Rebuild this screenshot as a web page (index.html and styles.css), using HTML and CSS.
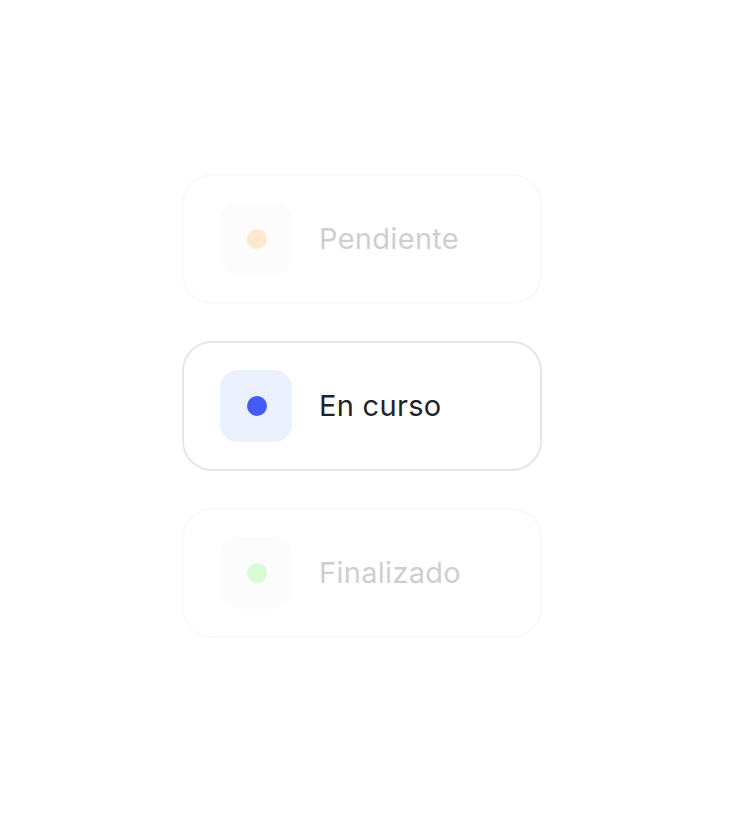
FILE: index.html
```html
<!DOCTYPE html>
<html lang="es">
<head>
    <meta charset="UTF-8">
    <meta name="viewport" content="width=device-width, initial-scale=1.0">
    <title>Estado</title>
    <link rel="stylesheet" href="styles.css">
</head>
<body>
    <div class="status-list">
        <div class="status faded">
            <div class="icon pending"><span class="dot"></span></div>
            <div class="label">Pendiente</div>
        </div>
        <div class="status active">
            <div class="icon progress"><span class="dot"></span></div>
            <div class="label">En curso</div>
        </div>
        <div class="status faded">
            <div class="icon done"><span class="dot"></span></div>
            <div class="label">Finalizado</div>
        </div>
    </div>
</body>
</html>
```

FILE: styles.css
```css
body {
    margin: 0;
    background-color: #ffffff;
    font-family: Inter, "Noto Sans", sans-serif;
}

.status-list {
    display: flex;
    flex-direction: column;
    gap: 37px;
    padding: 174px 0 0 182px;
}

.status {
    display: flex;
    align-items: center;
    gap: 27px;
    width: 360px;
    box-sizing: border-box;
    padding: 27px 36px;
    border: 2px solid #e6e6e8;
    border-radius: 30px;
    background-color: #ffffff;
}

.status.faded {
    opacity: 0.22;
}

.icon {
    display: flex;
    justify-content: center;
    align-items: center;
    width: 72px;
    height: 72px;
    border-radius: 18px;
    background-color: #f2f2f4;
}

.icon.progress {
    background-color: #ebf0fd;
}

.dot {
    width: 20px;
    height: 20px;
    margin-left: 2px;
    border-radius: 50%;
}

.pending .dot {
    background-color: #ff9a26;
}

.progress .dot {
    background-color: #4459f6;
}

.done .dot {
    background-color: #4cf03a;
}

.label {
    font-size: 29px;
    letter-spacing: 0.3px;
    color: #222326;
    padding-bottom: 2px;
}
```
